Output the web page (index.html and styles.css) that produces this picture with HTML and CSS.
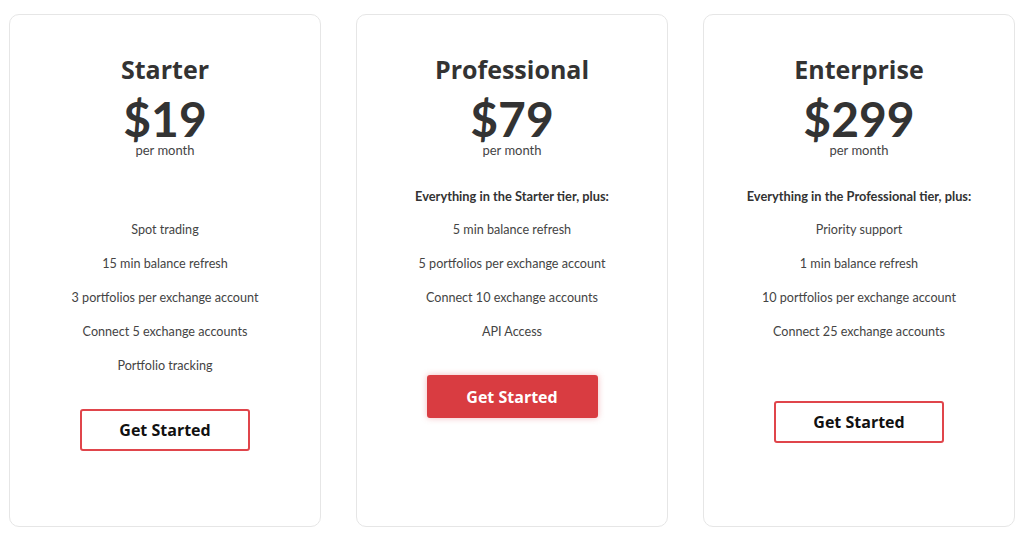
FILE: index.html
```html
<!DOCTYPE html>
<html lang="en">
<head>
<meta charset="utf-8">
<title>Pricing</title>
<link rel="stylesheet" href="styles.css">
</head>
<body>
<main class="plans">
  <section class="card">
    <h2 class="title">Starter</h2>
    <div class="price">$19</div>
    <div class="period">per month</div>
    <ul class="features">
      <li class="lead"></li>
      <li>Spot trading</li>
      <li>15 min balance refresh</li>
      <li>3 portfolios per exchange account</li>
      <li>Connect 5 exchange accounts</li>
      <li>Portfolio tracking</li>
    </ul>
    <a class="btn" href="#">Get Started</a>
  </section>
  <section class="card">
    <h2 class="title">Professional</h2>
    <div class="price">$79</div>
    <div class="period">per month</div>
    <ul class="features">
      <li class="lead">Everything in the Starter tier, plus:</li>
      <li>5 min balance refresh</li>
      <li>5 portfolios per exchange account</li>
      <li>Connect 10 exchange accounts</li>
      <li>API Access</li>
    </ul>
    <a class="btn btn-primary" href="#">Get Started</a>
  </section>
  <section class="card">
    <h2 class="title">Enterprise</h2>
    <div class="price">$299</div>
    <div class="period">per month</div>
    <ul class="features features-spaced">
      <li class="lead">Everything in the Professional tier, plus:</li>
      <li>Priority support</li>
      <li>1 min balance refresh</li>
      <li>10 portfolios per exchange account</li>
      <li>Connect 25 exchange accounts</li>
    </ul>
    <a class="btn" href="#">Get Started</a>
  </section>
</main>
</body>
</html>
```

FILE: styles.css
```css
* { box-sizing: border-box; }
html, body { margin: 0; padding: 0; background: #ffffff; }
body {
  font-family: "Lato", "Liberation Sans", sans-serif;
  color: #444444;
}
.plans {
  display: flex;
  gap: 35px;
  padding: 14px 9px 11px 9px;
  height: 538px;
}
.card {
  flex: 0 0 312px;
  border: 1px solid #e6e6e6;
  border-radius: 10px;
  display: flex;
  flex-direction: column;
  align-items: center;
  padding-top: 40px;
  text-align: center;
}
.title {
  margin: 0;
  font-family: "Open Sans", "DejaVu Sans", sans-serif;
  font-weight: 700;
  font-size: 25px;
  line-height: 29px;
  color: #333333;
}
.price {
  margin-top: 13px;
  font-family: "Lato", sans-serif;
  font-weight: 700;
  font-size: 48px;
  line-height: 44px;
  color: #333333;
}
.period {
  margin-top: 1px;
  font-size: 13px;
  line-height: 16px;
  color: #444444;
}
.features {
  list-style: none;
  margin: 21px 0 0 0;
  padding: 0;
  font-size: 12.6px;
}
.features li {
  height: 34px;
  line-height: 34px;
}
.features .lead {
  font-weight: 700;
  font-size: 12.8px;
  color: #333333;
}
.features-spaced { margin-bottom: 26px; }
.btn {
  margin-top: 26px;
  width: 170px;
  height: 42px;
  display: flex;
  align-items: center;
  justify-content: center;
  border: 2px solid #e0454b;
  border-radius: 3px;
  font-family: "Open Sans", "DejaVu Sans", sans-serif;
  font-weight: 700;
  font-size: 16px;
  color: #111111;
  text-decoration: none;
}
.btn-primary {
  width: 171px;
  height: 43px;
  background: #d93c41;
  border-color: #d93c41;
  color: #ffffff;
  box-shadow: 0 0 6px rgba(217, 60, 65, 0.35);
}
```
